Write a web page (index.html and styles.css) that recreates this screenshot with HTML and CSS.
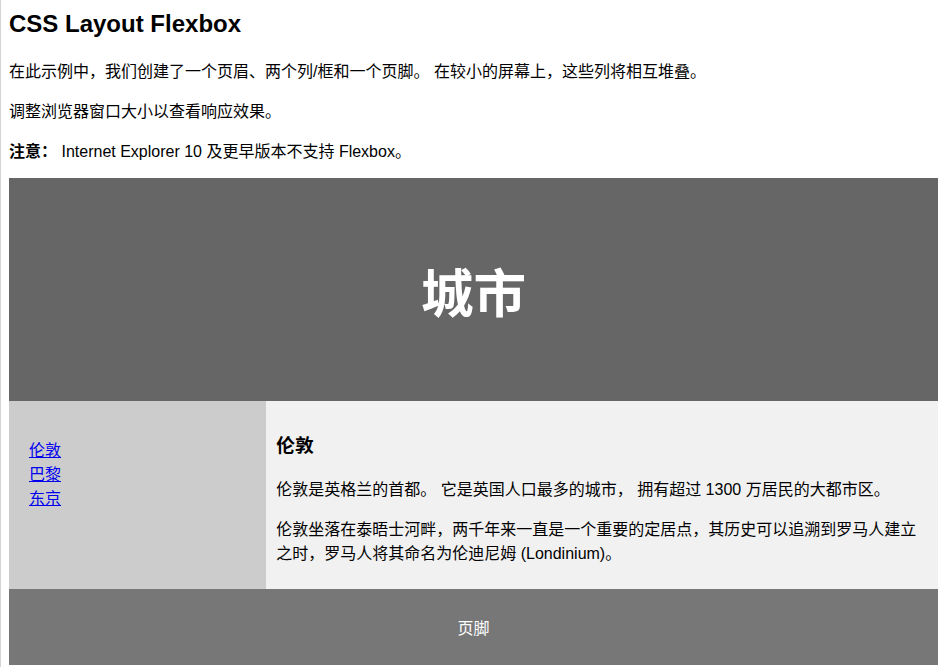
FILE: index.html
```html
<!DOCTYPE html>
<html lang="zh-CN">
<head>
    <meta charset="UTF-8">
    <meta name="viewport" content="width=device-width, initial-scale=1.0">
    <title>CSS Layout Flexbox</title>
    <link rel="stylesheet" href="styles.css">
</head>
<body>

    <h2 class="page-title">CSS Layout Flexbox</h2>
    <p>在此示例中，我们创建了一个页眉、两个列/框和一个页脚。 在较小的屏幕上，这些列将相互堆叠。</p>
    <p>调整浏览器窗口大小以查看响应效果。</p>
    <p><strong>注意：</strong> Internet Explorer 10 及更早版本不支持 Flexbox。</p>

    <header class="header">
        <h2>城市</h2>
    </header>

    <section class="row">
        <nav class="side">
            <ul>
                <li><a href="#">伦敦</a></li>
                <li><a href="#">巴黎</a></li>
                <li><a href="#">东京</a></li>
            </ul>
        </nav>

        <article class="main">
            <h3>伦敦</h3>
            <p>伦敦是英格兰的首都。 它是英国人口最多的城市， 拥有超过 1300 万居民的大都市区。</p>
            <p>伦敦坐落在泰晤士河畔，两千年来一直是一个重要的定居点，其历史可以追溯到罗马人建立之时，罗马人将其命名为伦迪尼姆 (Londinium)。</p>
        </article>
    </section>

    <footer class="footer">
        <p>页脚</p>
    </footer>

</body>
</html>
```

FILE: styles.css
```css
html {
    border-left: 1px solid #d4d4d4;
}
body {
    font-family: "Liberation Sans", Arial, "Noto Sans CJK SC", sans-serif;
    margin: 8px 7px 8px 8px;
    color: #000;
}
.page-title {
    font-size: 24px;
    margin: 2px 0 20px;
}
p {
    margin: 16px 0;
}
.header {
    background-color: #666;
    padding: 30px;
    text-align: center;
    font-size: 35px;
    color: white;
}
.header h2 {
    margin: 0.83em 0;
}
.row {
    display: flex;
}
.side {
    flex: 1;
    background: #ccc;
    padding: 20px;
}
.side ul {
    list-style-type: none;
    padding: 0;
}
.side a {
    color: #0000ee;
}
.main {
    flex: 3;
    background-color: #f1f1f1;
    padding: 10px 10px 9px;
}
.main h3 {
    font-size: 18.72px;
    margin: 18.72px 0;
}
.footer {
    background-color: #777;
    padding: 10px;
    text-align: center;
    color: white;
}
```
